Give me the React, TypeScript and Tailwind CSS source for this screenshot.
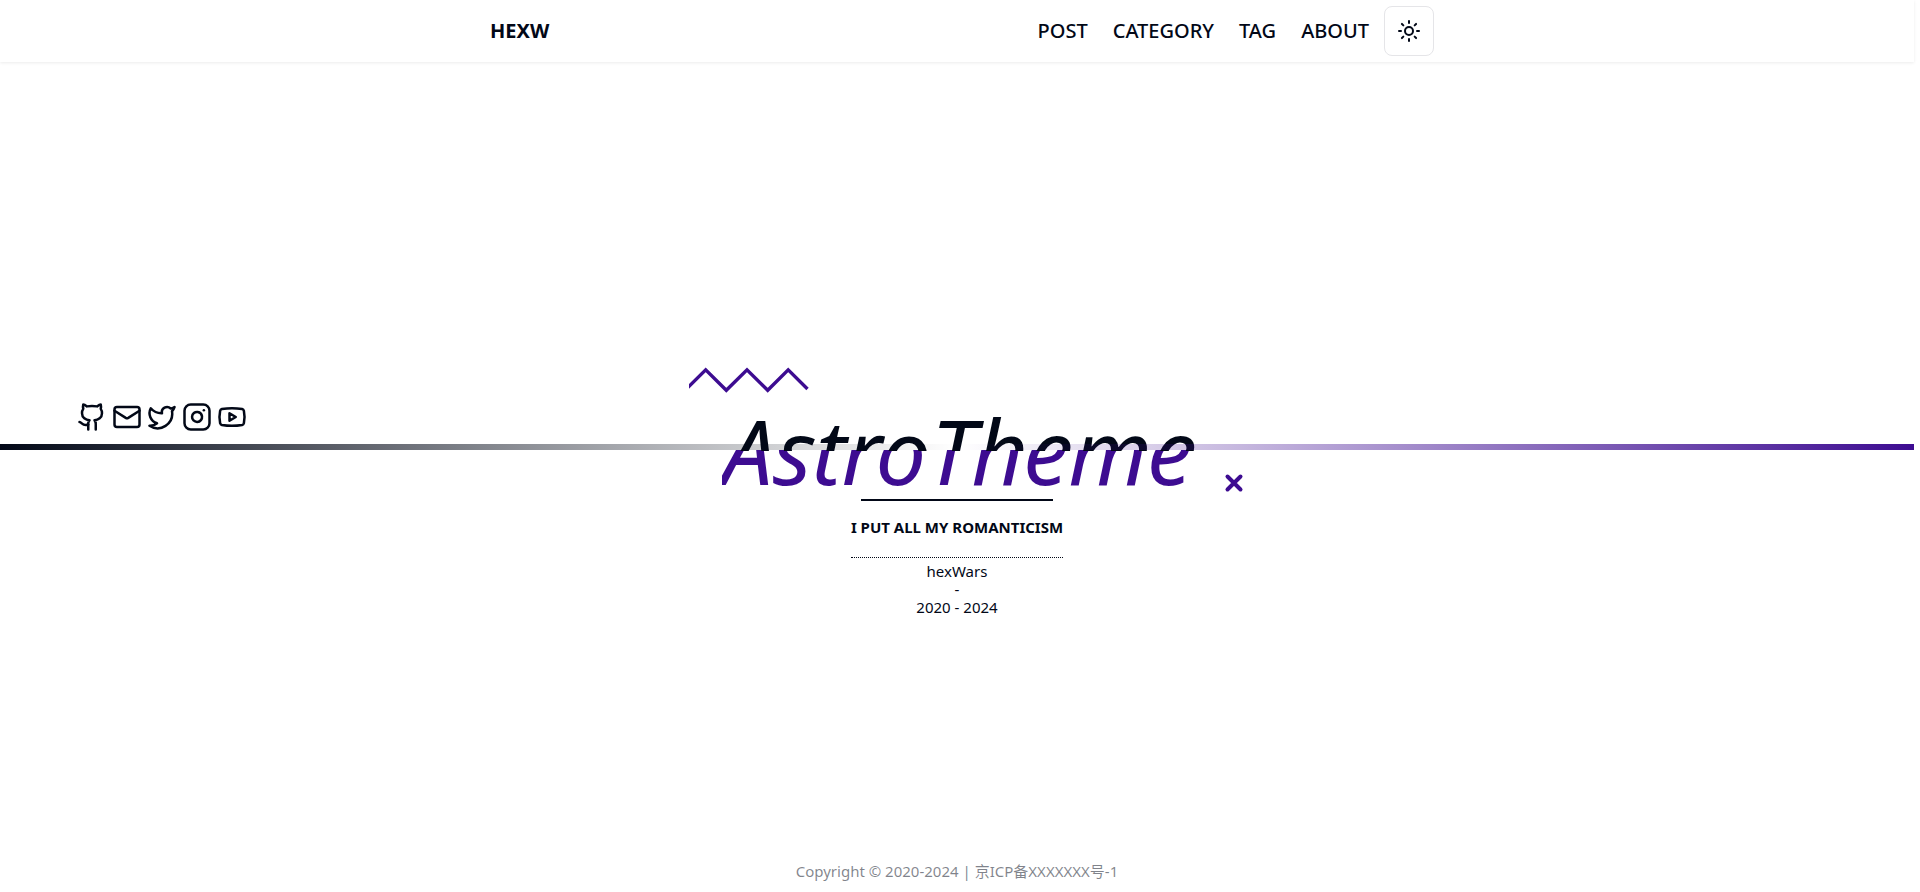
import { Github, Instagram, Mail, Sun, Twitter, Youtube } from "lucide-react";

const links = ["POST", "CATEGORY", "TAG", "ABOUT"];

const socials = [
  { name: "GitHub", Icon: Github },
  { name: "Mail", Icon: Mail },
  { name: "Twitter", Icon: Twitter },
  { name: "Instagram", Icon: Instagram },
  { name: "YouTube", Icon: Youtube },
];

function Header() {
  return (
    <header className="shadow-[0_1px_3px_rgba(0,0,0,0.08)]">
      <nav className="mx-auto flex h-[62px] w-full max-w-[954px] items-center justify-between pl-2.5">
        <a href="#" className="text-xl font-bold">
          HEXW
        </a>
        <div className="flex items-center gap-[15px]">
          <ul className="flex gap-[25px] text-xl font-medium">
            {links.map((link) => (
              <li key={link}>
                <a href="#">{link}</a>
              </li>
            ))}
          </ul>
          <button
            type="button"
            aria-label="Toggle theme"
            className="flex size-[50px] items-center justify-center rounded-lg border border-[#e5e5e8]"
          >
            <Sun className="size-6" />
          </button>
        </div>
      </nav>
    </header>
  );
}

function Title() {
  return (
    <div className="relative">
      <svg
        viewBox="0 0 120 26"
        className="absolute -top-[38px] -left-[33px] h-[26px] w-[120px] text-[#3d0c91]"
        fill="none"
        stroke="currentColor"
        strokeWidth="3.4"
        aria-hidden="true"
      >
        <path d="M-2 21.300L16.700 2.800L37.300 23.300L58 2.800L78.700 23.300L99.200 2.800L118.500 22" />
      </svg>
      <h1 className="relative text-[90px] leading-none whitespace-nowrap italic">
        <span className="block text-[#3d0c91] [clip-path:inset(50%_0_0_0)]">AstroTheme</span>
        <span aria-hidden="true" className="absolute top-0 left-[5px] [clip-path:inset(0_0_49%_0)]">
          AstroTheme
        </span>
      </h1>
      <svg
        viewBox="0 0 20 20"
        className="absolute top-[68px] left-full ml-8 size-5 text-[#3d0c91]"
        fill="none"
        stroke="currentColor"
        strokeWidth="4"
        strokeLinecap="round"
        aria-hidden="true"
      >
        <path d="M3.500 3.500L16.500 16.500M16.500 3.500L3.500 16.500" />
      </svg>
    </div>
  );
}

export default function App() {
  return (
    <div className="flex min-h-screen flex-col bg-white pr-1.5 font-['Noto_Sans','Noto_Sans_CJK_SC',sans-serif] text-[#020817]">
      <Header />
      <main className="flex flex-1 flex-col items-center pt-[343px]">
        <div className="relative grid w-full grid-cols-[1fr_auto_1fr]">
          <div className="flex h-[39px] items-end gap-[5px] pb-3 pl-[4vw]">
            {socials.map(({ name, Icon }) => (
              <a key={name} href="#" aria-label={name}>
                <Icon className="size-[30px]" />
              </a>
            ))}
          </div>
          <Title />
          <div className="pointer-events-none absolute inset-x-0 top-[39px] h-1.5 bg-linear-to-r from-[#020817] via-transparent to-[#3d0c91]" />
        </div>
        <hr className="mt-1 h-0.5 w-48 border-0 bg-[#020817]" />
        <p className="mt-4 border-b border-dotted border-[#020817] pb-5 text-[15px] leading-5 font-bold">
          I PUT ALL MY ROMANTICISM
        </p>
        <div className="mt-1 text-center text-[15px] leading-[18px]">
          <p>hexWars</p>
          <p>-</p>
          <p>2020 - 2024</p>
        </div>
      </main>
      <footer className="pb-[11px] text-center text-[15px] leading-5 text-[#020817]/50">
        Copyright © 2020-2024 | 京ICP备XXXXXXX号-1
      </footer>
    </div>
  );
}
